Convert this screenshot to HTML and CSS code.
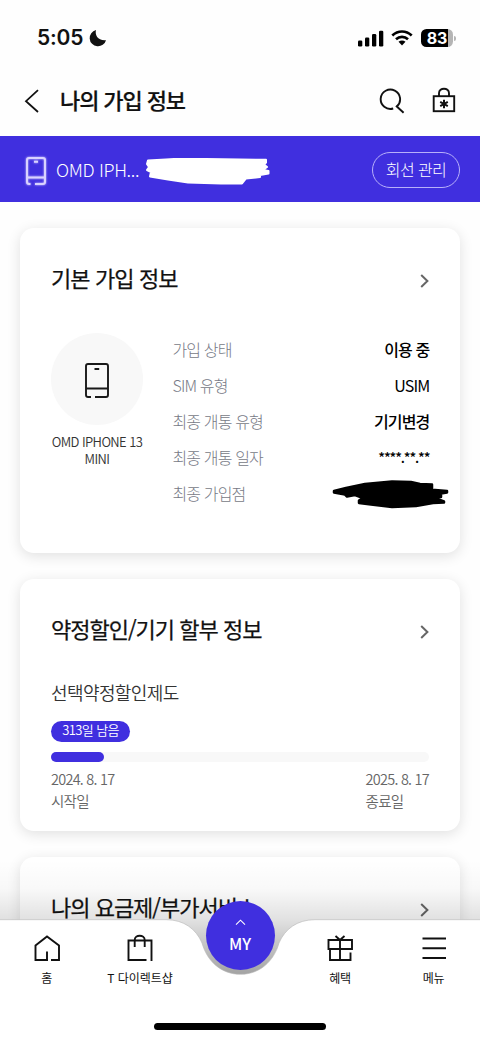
FILE: index.html
```
<!DOCTYPE html>
<html lang="ko">
<head>
<meta charset="utf-8">
<title>나의 가입 정보</title>
<link rel="stylesheet" href="styles.css">
</head>
<body>
<div class="screen">
  <div class="status">
    <span class="time">5:05</span>
    <svg class="moon" width="18" height="18" viewBox="0 0 18 18"><path d="M7 1C5.600 6 9 12 17 11.200A8.300 8.300 0 1 1 7 1Z" fill="#111"/></svg>
    <span class="spacer"></span>
    <svg class="signal" width="26" height="17" viewBox="0 0 26 17" fill="#000"><rect x="0" y="10.500" width="4.300" height="6" rx="1.300"/><rect x="7" y="7.500" width="4.300" height="9" rx="1.300"/><rect x="14" y="4" width="4.300" height="12.500" rx="1.300"/><rect x="21" y=".8" width="4.300" height="15.700" rx="1.300"/></svg>
    <svg class="wifi" width="22" height="16" viewBox="0 0 22 16"><g fill="none" stroke="#000" stroke-width="2.700"><path d="M1.300 5.400C7 .2 15 .2 20.700 5.400"/><path d="M5 9.200C8.500 6.100 13.500 6.100 17 9.200"/></g><path d="M7.500 11.800C9.500 10 12.500 10 14.500 11.800L11 15.500Z" fill="#000"/></svg>
    <span class="battery">83</span><span class="battery-tip"></span>
  </div>
  <header class="header">
    <svg class="back" width="16" height="24" viewBox="0 0 16 24" fill="none" stroke="#111" stroke-width="1.800"><path d="M14 1.200 2 12.200 14 23"/></svg>
    <h1>나의 가입 정보</h1>
    <span class="spacer"></span>
    <svg class="search" width="26" height="26" viewBox="0 0 26 26" fill="none" stroke="#111" stroke-width="1.900"><path d="M14.200 20.500A9.700 9.700 0 1 1 17.800 18.500M17 17.700 24.600 24.800"/></svg>
    <svg class="bag" width="24" height="26" viewBox="0 0 24 26" fill="none" stroke="#111" stroke-width="1.900"><rect x="1.700" y="9.200" width="20.500" height="15"/><path d="M7 9V6.200C7 .2 17 .2 17 6.200V9"/><path d="M12 12.700V21.300M8.200 14.900 15.800 19.100M15.800 14.900 8.200 19.100" stroke-width="2"/></svg>
  </header>
  <div class="line-bar">
    <svg class="line-phone" width="20" height="28" viewBox="0 0 20 28" fill="none" stroke="#d9d2ff" stroke-width="2"><path d="M4.500 27H3Q1 27 1 25V3Q1 1 3 1H17Q19 1 19 3V25Q19 27 17 27H9M1 20.500H19M8 4.800H12"/></svg>
    <span class="line-name">OMD IPH...</span>
    <svg class="line-mask" width="125" height="28" viewBox="0 0 125 28"><path d="M2 2.500 20 1.500 31 .8 60 1 120 1.800V4.500L118 6.500L121 9L117 12L122.500 13V15.500L114 17V19L100 20.500L96 25.500H75L42 24.500 22 21.500 4 18.500 5 14 1 12 3 9 1 6Z" fill="#fff" stroke="#fff" stroke-width="2" stroke-linejoin="round"/></svg>
    <span class="spacer"></span>
    <button class="line-manage">회선 관리</button>
  </div>
  <main class="content">
    <section class="card basic">
      <div class="card-head"><h2>기본 가입 정보</h2><svg class="chev" width="9" height="14" viewBox="0 0 9 14"><path d="M1.200 1 7.400 7 1.200 13"/></svg></div>
      <div class="basic-body">
        <div class="device">
          <div class="device-circle"><svg width="24" height="35" viewBox="0 0 24 35" fill="none" stroke="#191919" stroke-width="1.900"><path d="M6 34H3Q1 34 1 32V3Q1 1 3 1H21Q23 1 23 3V32Q23 34 21 34H10M1 25.500H23M9.500 6H14.200"/></svg></div>
          <p>OMD IPHONE 13<br>MINI</p>
        </div>
        <dl class="facts">
          <div><dt>가입 상태</dt><dd>이용 중</dd></div>
          <div><dt>SIM 유형</dt><dd class="latin">USIM</dd></div>
          <div><dt>최종 개통 유형</dt><dd>기기변경</dd></div>
          <div><dt>최종 개통 일자</dt><dd class="stars">****.**.**</dd></div>
          <div><dt>최종 가입점</dt><dd><svg class="store-mask" width="118" height="29" viewBox="0 0 118 29"><path d="M2 11 14 8 33 4 60 1.500 79 2 88 4 100 4.500V8L97 9.500 115 11V12.500L109 13.500V17H100L112 21.500V22.500L101 23 84 26 60 27 39 24.500 27 23V20.500L31 18 23 15 15 16.500 13 14.500 2 12.500Z" fill="#000" stroke="#000" stroke-width="2.500" stroke-linejoin="round"/></svg></dd></div>
        </dl>
      </div>
    </section>
    <section class="card plan">
      <div class="card-head"><h2 class="tight">약정할인/기기 할부 정보</h2><svg class="chev" width="9" height="14" viewBox="0 0 9 14"><path d="M1.200 1 7.400 7 1.200 13"/></svg></div>
      <h3>선택약정할인제도</h3>
      <span class="remain">313일 남음</span>
      <div class="track"><div class="fill" style="width:14%"></div></div>
      <div class="dates"><p>2024. 8. 17<br>시작일</p><p>2025. 8. 17<br>종료일</p></div>
    </section>
    <section class="card service">
      <div class="card-head"><h2 class="tight">나의 요금제/부가서비스</h2><svg class="chev" width="9" height="14" viewBox="0 0 9 14"><path d="M1.200 1 7.400 7 1.200 13"/></svg></div>
    </section>
  </main>
  <nav class="nav">
    <svg class="nav-bg" width="480" height="180" viewBox="0 0 480 180">
      <defs><linearGradient id="fade" x1="0" y1="0" x2="0" y2="1"><stop offset="0" stop-color="#000" stop-opacity="0"/><stop offset=".25" stop-color="#000" stop-opacity=".025"/><stop offset=".52" stop-color="#000" stop-opacity=".12"/><stop offset="1" stop-color="#000" stop-opacity=".37"/></linearGradient></defs>
      <rect width="480" height="116" fill="url(#fade)"/>
      <path d="M-2 59.700H166C184 59.700 196 69 202 83C207 101 221 114.300 240.500 114.300S274 101 279 83C285 69 297 59.700 315 59.700H482V182H-2Z" fill="#fff" stroke="#b8b8b8" stroke-width=".6"/>
    </svg>
    <div class="tabs">
      <a class="tab"><svg width="28" height="28" viewBox="0 0 28 28"><path d="M14 26V17.500M15 26H2.500V11.500L14 2.500 26 11.500V26H18"/></svg><span>홈</span></a>
      <a class="tab"><svg width="28" height="28" viewBox="0 0 28 28"><path d="M20.500 26H2.500V6.500H25.500V27M8.700 13V6C8.700 .3 18.700 .3 18.700 6V13"/></svg><span class="shop">T 다이렉트샵</span></a>
      <a class="my"><svg width="11" height="7" viewBox="0 0 11 7"><path d="M1 5.700 5.500 1.200 10 5.700" fill="none" stroke="#fff" stroke-width="1.100"/></svg><span>MY</span></a>
      <a class="tab"><svg width="28" height="28" viewBox="0 0 28 28"><path d="M2.500 6H26V15H2.500ZM4 15V26H24.500V18.500M14 26V6L9.500 2M14 6 18.500 2"/></svg><span>혜택</span></a>
      <a class="tab"><svg width="28" height="28" viewBox="0 0 28 28"><path d="M2.500 4.500H26M2.500 14.200H26M2.500 24H26"/></svg><span>메뉴</span></a>
    </div>
    <div class="home-bar"></div>
  </nav>
</div>
</body>
</html>
```
FILE: styles.css
```
* { box-sizing: border-box; margin: 0; padding: 0; }
body { font-family: "Noto Sans CJK KR", "Noto Sans", sans-serif; color: #111; background: #fff; }
svg { display: block; flex: none; }
.screen { position: relative; width: 480px; height: 1040px; overflow: hidden; background: #fefefe; display: flex; flex-direction: column; white-space: nowrap; }
.spacer { flex: 1; }

.status { flex: none; height: 68px; padding: 8px 25px 0 37px; display: flex; align-items: center; }
.time { font: 600 21px/28px Inter, sans-serif; letter-spacing: -.2px; }
.moon { margin-left: 6px; }
.signal { margin-right: 7px; }
.wifi { margin-right: 8px; }
.battery { width: 32px; height: 18px; border-radius: 5.500px; background: linear-gradient(90deg, #000 83%, #b5b5b5 83%); color: #fff; font: 700 16px/18px Inter, sans-serif; text-align: center; }
.battery-tip { width: 2px; height: 5px; margin-left: 1px; margin-right: -1px; border-radius: 0 2px 2px 0; background: #b5b5b5; }

.header { flex: none; height: 68px; padding: 0 24px; display: flex; align-items: center; }
.back { margin-top: -2px; }
.header h1 { margin: -6px 0 0 20px; font-size: 22px; line-height: 32px; font-weight: 500; letter-spacing: -1.1px; -webkit-text-stroke: .2px #111; }
.search { margin: -3px 27px 0 0; }
.bag { margin-top: -5px; }

.line-bar { flex: none; height: 66px; padding: 0 20px 0 26px; display: flex; align-items: center; background: #402fdf; color: #fff; }
.line-phone { margin-top: 4px; filter: drop-shadow(0 0 1px #cfc8ff); }
.line-name { margin-left: 10px; width: 84px; font-size: 18px; line-height: 28px; font-weight: 300; letter-spacing: -.35px; }
.line-mask { margin: 5px 0 0 6px; }
.line-manage { width: 88px; height: 36px; border: 1px solid #b8b0fa; border-radius: 18px; background: none; color: #fff; font: 300 16px/32px "Noto Sans CJK KR", sans-serif; letter-spacing: -.6px; margin-top: 2px; padding-bottom: 3px; }

.content { padding: 26px 20px 0; display: flex; flex-direction: column; gap: 26px; }
.card { flex: none; width: 440px; padding: 34px 31px 0; border-radius: 14px; background: #fff; box-shadow: 0 3px 14px rgba(0, 0, 0, .12); }
.card-head { display: flex; justify-content: space-between; align-items: center; height: 34px; }
.card h2 { font-size: 22px; line-height: 34px; font-weight: 400; letter-spacing: -.9px; margin-top: -5px; -webkit-text-stroke: .25px #111; }
.card .tight { letter-spacing: -1px; }
.chev { margin-top: 3px; fill: none; stroke: #666; stroke-width: 2; }
.basic { height: 325px; }
.basic-body { display: flex; margin-top: 37px; }
.device { width: 92px; text-align: center; }
.device-circle { width: 92px; height: 92px; border-radius: 50%; background: #f8f8f8; display: flex; justify-content: center; align-items: center; padding-top: 3px; }
.device p { margin-top: 8px; font-size: 13px; line-height: 17px; letter-spacing: -.6px; color: #333; font-weight: 350; }
.facts { flex: 1; margin-left: 30px; }
.facts div { height: 36px; display: flex; justify-content: space-between; align-items: center; }
.facts dt, .facts dd { font-size: 16px; line-height: 24px; letter-spacing: -.85px; margin-top: -4px; }
.facts dt { color: #777a86; font-weight: 300; margin-left: -.5px; }
.facts dd { color: #000; font-weight: 500; margin-right: -.4px; }
.facts .latin { font-weight: 400; }
.facts .stars { font-size: 14px; letter-spacing: -1.15px; }
.facts .store-mask { margin: 3px -21px 0 0; }

.plan { height: 252px; }
.plan h3 { margin-top: 32px; font-size: 18px; line-height: 26px; font-weight: 350; letter-spacing: -.6px; color: #333; }
.remain { display: block; width: 79px; height: 21px; margin-top: 16px; border-radius: 11px; background: #402fdf; color: #fff; font-size: 13px; line-height: 17px; letter-spacing: -.6px; text-align: center; font-weight: 350; }
.track { height: 10px; margin-top: 10px; border-radius: 5px; background: #f8f8f8; }
.fill { height: 10px; border-radius: 5px; background: #402fdf; }
.dates { display: flex; justify-content: space-between; margin-top: 6px; font-size: 14.500px; line-height: 22px; letter-spacing: -.75px; color: #666; font-weight: 350; }
.service { height: 200px; }

.nav { position: absolute; left: 0; bottom: 0; width: 480px; height: 180px; }
.nav-bg { position: absolute; inset: 0; }
.tabs { position: relative; height: 162px; padding-top: 74px; display: grid; grid-template-columns: 93px 94px 106px 94px 93px; justify-items: center; align-items: start; }
.tab { display: flex; flex-direction: column; align-items: center; gap: 6px; font-size: 12px; line-height: 20px; letter-spacing: -.3px; }
.tab svg { fill: none; stroke: #111; stroke-width: 1.900; }
.tab .shop { letter-spacing: -.05px; }
.my { width: 69px; height: 69px; margin-top: -33.500px; border-radius: 50%; background: #402fdf; color: #fff; display: flex; flex-direction: column; align-items: center; padding-top: 18.500px; font-size: 16px; line-height: 24px; font-weight: 500; gap: 5px; }
.home-bar { position: absolute; left: 154px; bottom: 10px; width: 172px; height: 7px; border-radius: 4px; background: #000; }
```
